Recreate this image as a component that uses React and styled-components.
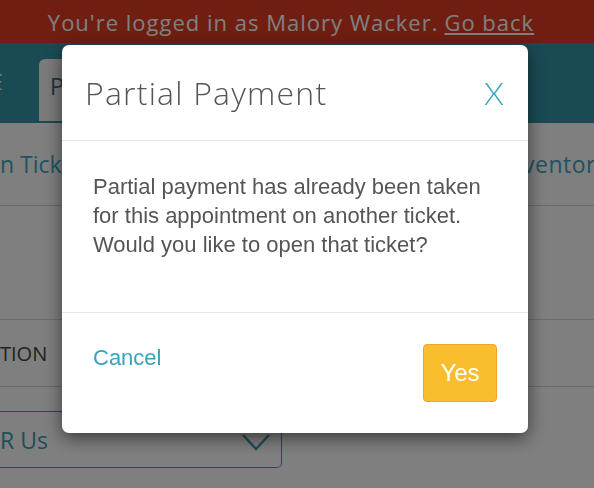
import React from 'react';
import styled, { createGlobalStyle } from 'styled-components';

const GlobalStyle = createGlobalStyle`
  html, body {
    margin: 0;
    padding: 0;
    height: 488px;
    overflow: hidden;
    background: #fff;
  }
  #root {
    height: 488px;
  }
`;

const Page = styled.div`
  font-family: "Open Sans", Lato, sans-serif;
  height: 488px;
  overflow: hidden;
`;

const Banner = styled.div`
  height: 43px;
  background: #de3d23;
  color: #fff;
  font-size: 22px;
  letter-spacing: 1px;
  display: flex;
  align-items: center;
  justify-content: center;
  gap: 6px;
  padding-right: 12px;
  a {
    color: #fff;
    text-decoration: underline;
  }
`;

const Nav = styled.div`
  height: 80px;
  background: #3595a9;
  display: flex;
  align-items: flex-end;
  padding-bottom: 2px;
  box-sizing: border-box;
  gap: 36px;
`;

const NavItem = styled.span`
  color: #f2f2f2;
  font-size: 21px;
  align-self: center;
  margin-left: -9px;
`;

const Tab = styled.div`
  height: 62px;
  width: 140px;
  background: #f6f6f6;
  border-radius: 6px 6px 0 0;
  color: #3e6f7b;
  font-size: 24px;
  padding: 10px 0 0 11px;
  box-sizing: border-box;
`;

const Row = styled.div`
  height: ${p => p.$h}px;
  border-bottom: 1px solid #d5d5d5;
  display: flex;
  align-items: center;
  justify-content: space-between;
  font-size: ${p => p.$size || 23}px;
  color: ${p => p.$color || '#3ca8c0'};
`;

const RightLink = styled.span`
  flex-shrink: 0;
  white-space: nowrap;
  margin-right: -14px;
  letter-spacing: 0.5px;
`;

const Select = styled.div`
  margin-top: 24px;
  height: 57px;
  width: 282px;
  box-sizing: border-box;
  border: 1px solid #3a9db2;
  border-left: none;
  border-radius: 0 0 5px 0;
  display: flex;
  align-items: center;
  justify-content: space-between;
  padding: 0 10px 0 0;
  color: #3a9db2;
  font-size: 23px;
  svg {
    margin-top: 4px;
  }
`;

const Backdrop = styled.div`
  position: fixed;
  inset: 0;
  background: rgba(0, 0, 0, 0.5);
`;

const Modal = styled.div`
  position: fixed;
  top: 45px;
  left: 62px;
  width: 466px;
  background: #fff;
  border-radius: 7px;
  box-shadow: 0 5px 18px rgba(0, 0, 0, 0.55);
  overflow: hidden;
`;

const Header = styled.div`
  height: 96px;
  border-bottom: 1px solid #e5e5e5;
  display: flex;
  align-items: center;
  justify-content: space-between;
  padding: 0 24px 0 23px;
  box-sizing: border-box;
`;

const Title = styled.h4`
  margin: 0;
  font-family: "Open Sans", Lato, sans-serif;
  font-weight: 300;
  font-size: 32px;
  letter-spacing: 1.2px;
  color: #555;
`;

const Close = styled.button`
  border: none;
  background: none;
  padding: 0;
  font-family: Lato, "Open Sans", sans-serif;
  font-weight: 300;
  font-size: 32px;
  color: #38a6c1;
  cursor: pointer;
`;

const Body = styled.div`
  padding: 31px 40px 53px 31px;
  border-bottom: 1px solid #e5e5e5;
  font-family: "Liberation Sans", Arial, sans-serif;
  font-size: 22px;
  line-height: 29px;
  color: #555;
`;

const Footer = styled.div`
  padding: 31px;
  display: flex;
  align-items: flex-start;
  justify-content: space-between;
  font-family: "Liberation Sans", Arial, sans-serif;
`;

const LinkButton = styled.a`
  color: #36a3be;
  font-size: 22px;
  line-height: 27px;
  text-decoration: none;
`;

const YesButton = styled.button`
  width: 74px;
  height: 58px;
  background: #f8be2d;
  border: 1px solid #f1a22a;
  border-radius: 4px;
  color: #fff;
  font-family: "Liberation Sans", Arial, sans-serif;
  font-size: 24px;
  padding: 0;
`;

export default function App() {
  return (
    <>
      <GlobalStyle />
      <Page>
        <Banner>
          <span>You're logged in as Malory Wacker.</span>
          <a href="#">Go back</a>
        </Banner>
        <Nav>
          <NavItem>E</NavItem>
          <Tab>P</Tab>
        </Nav>
        <Row $h={82}>
          <span>n Ticket</span>
          <RightLink>Inventory</RightLink>
        </Row>
        <Row $h={113} />
        <Row $h={66} $size={20} $color="#444">
          <span>TION</span>
        </Row>
        <Select>
          <span>R Us</span>
          <svg width="30" height="20" viewBox="0 0 30 20">
            <path d="M2 3 L15 17 L28 3" fill="none" stroke="#3a9db2" strokeWidth="2.5" />
          </svg>
        </Select>
      </Page>
      <Backdrop />
      <Modal role="dialog">
        <Header>
          <Title>Partial Payment</Title>
          <Close>X</Close>
        </Header>
        <Body>
          Partial payment has already been taken for this appointment on another ticket. Would you like to open that ticket?
        </Body>
        <Footer>
          <LinkButton href="#">Cancel</LinkButton>
          <YesButton>Yes</YesButton>
        </Footer>
      </Modal>
    </>
  );
}
